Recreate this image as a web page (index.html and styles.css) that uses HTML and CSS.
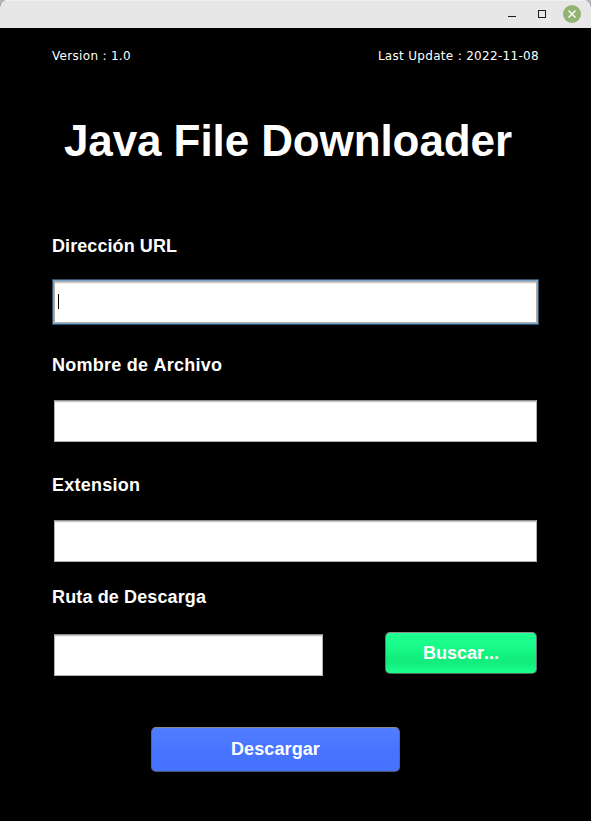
FILE: index.html
```html
<!DOCTYPE html>
<html lang="es">
<head>
<meta charset="utf-8">
<title>Java File Downloader</title>
<link rel="stylesheet" href="styles.css">
</head>
<body>
<div class="window">
  <header class="titlebar">
    <svg class="controls" width="80" height="28" viewBox="0 0 80 28">
      <rect x="5" y="16" width="8" height="1" fill="#1c1c1c"/>
      <rect x="35.5" y="10.5" width="7" height="7" fill="none" stroke="#1c1c1c"/>
      <circle cx="69" cy="14" r="9" fill="#92b372"/>
      <path d="M65.5 10.5l7 7M72.5 10.5l-7 7" stroke="#fff" stroke-width="1.4"/>
    </svg>
  </header>
  <main class="content">
    <div class="meta"><span>Version : 1.0</span><span class="updated">Last Update : 2022-11-08</span></div>
    <h1 class="title">Java File Downloader</h1>
    <form class="form">
      <label class="label url-label">Dirección URL</label>
      <div class="field focused"><span class="caret"></span></div>
      <label class="label name-label">Nombre de Archivo</label>
      <div class="field"></div>
      <label class="label ext-label">Extension</label>
      <div class="field"></div>
      <label class="label path-label">Ruta de Descarga</label>
      <div class="path-row">
        <div class="field path"></div>
        <button type="button" class="button browse">Buscar...</button>
      </div>
      <button type="button" class="button download">Descargar</button>
    </form>
  </main>
</div>
</body>
</html>
```
FILE: styles.css
```css
* { box-sizing: border-box; }
body { margin: 0; background: #b8b8b8; font-family: "Liberation Sans", Arial, sans-serif; }
.window { height: 821px; background: #000; border-radius: 7px 7px 0 0; overflow: hidden; }
.titlebar {
  height: 28px; background: #e7e7e7; display: flex; justify-content: flex-end;
  padding-right: 8px; box-shadow: inset 0 1px #f0f0f0;
}
.controls { display: block; }
.content { padding: 20px 52px 0; color: #fff; }
.meta {
  display: flex; justify-content: space-between; height: 16px; line-height: 16px;
  font-family: "DejaVu Sans", sans-serif; font-size: 12px; letter-spacing: 0.31px;
}
.title {
  margin: 52px 0 0 12px; height: 50px; line-height: 50px;
  font-size: 44px; font-weight: bold; white-space: nowrap; font-kerning: none;
  letter-spacing: -0.1px;
}
.form { display: flex; flex-direction: column; padding-top: 70px; }
.label { height: 20px; line-height: 20px; font-size: 18px; font-weight: bold; font-kerning: none; }
.url-label { letter-spacing: 0.08px; }
.name-label { letter-spacing: 0.25px; }
.ext-label { letter-spacing: 0.24px; }
.field {
  width: 483px; height: 42px; margin: 25px 0 33px 2px; background: #fff;
  border: 1px solid #b4b1b1; border-top-color: #918c8c;
  box-shadow: inset 0 1px #c8c6c6, inset 0 2px #f2f2f2;
}
.focused {
  margin-bottom: 32px;
  border-color: #b4b1ac;
  box-shadow: 0 0 0 1px #73a4d1, 0 0 0 2px #35506a, inset 0 1px #c8c6c6, inset 0 2px #f2f2f2;
}
.caret { display: block; width: 1px; height: 15px; margin: 12px 0 0 3px; background: #000; }
.path-label { margin-top: -8px; letter-spacing: 0.13px; }
.path-row { display: flex; justify-content: space-between; width: 485px; margin-top: 25px; }
.path { width: 269px; margin: 2px 0 0 2px; }
.button {
  padding: 0; border: 1px solid #777; border-radius: 5px; color: #fff;
  font: bold 18px/20px "Liberation Sans", Arial, sans-serif; font-kerning: none;
}
.browse {
  width: 152px; height: 42px;
  border-color: #8b8a8b #68756e #49664f;
  background: linear-gradient(#20ff91, #18fb88 35%, #12ed7d 65%, #12ed7d 75%, #1bff8d);
}
.download {
  width: 249px; height: 45px; margin: 51px 0 0 99px; padding-bottom: 2px;
  letter-spacing: 0.1px;
  border-color: #8b8a8b #5f6678 #4d5674;
  background: linear-gradient(#527dff, #4674ff 55%, #4573ff);
}
```
